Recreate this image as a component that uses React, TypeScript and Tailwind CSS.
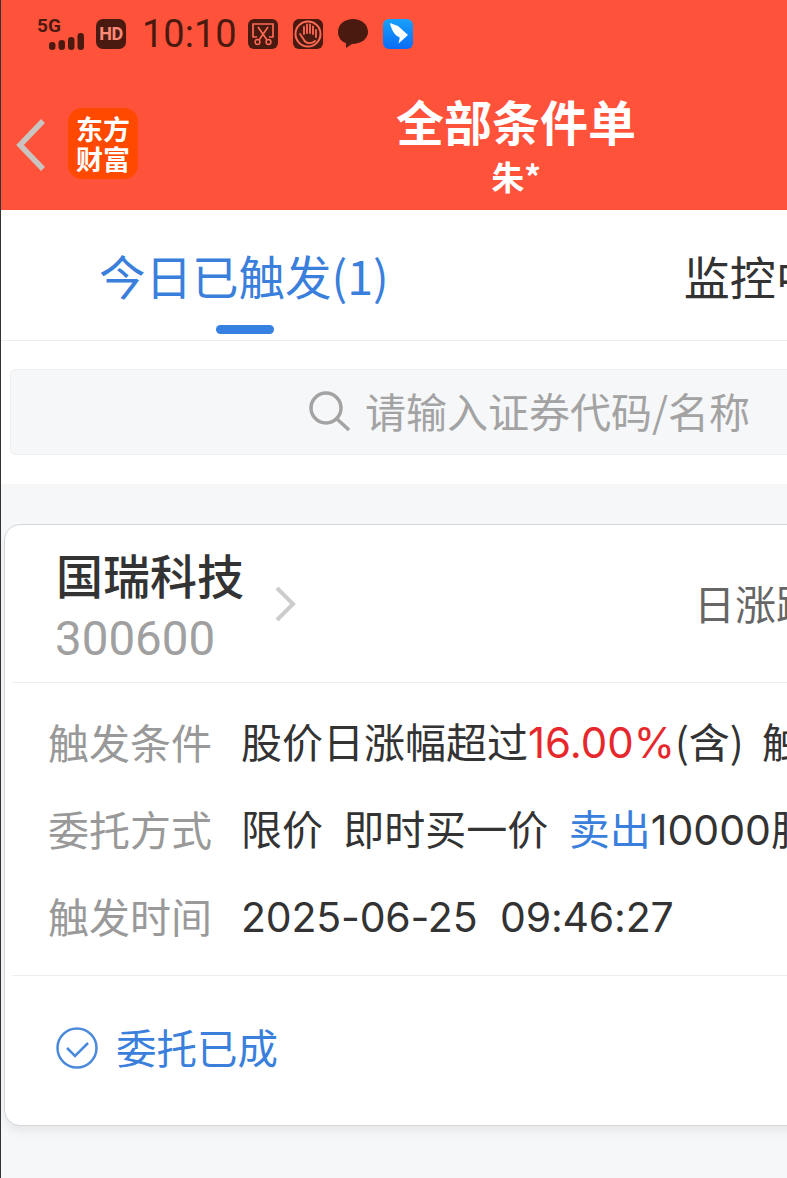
import React from "react";

const cjk = { fontFamily: '"Noto Sans CJK SC", Roboto, sans-serif' };
const num = { fontFamily: "Roboto, sans-serif" };
const inter = { fontFamily: "Inter, sans-serif" };

function Row({ label, children }: { label: string; children: React.ReactNode }) {
  return (
    <div className="flex h-[87px] items-center whitespace-nowrap text-[41px] leading-none">
      <span className="w-[193px] shrink-0 text-[#999999]">{label}</span>
      <span className="whitespace-pre text-[#333333]">{children}</span>
    </div>
  );
}

function StatusIcons() {
  return (
    <div className="flex h-[68px] items-center pl-[36px] text-[#4a1a10]">
      <div className="relative h-[32px] w-[49px]">
        <span className="absolute left-0 top-[-2px] text-[19px] font-bold leading-[20px]" style={num}>5G</span>
        <svg className="absolute left-[12px] top-[15px]" width="36" height="18" viewBox="0 0 36 18" fill="#4a1a10">
          <rect x="0" y="9" width="6.500" height="8" rx="3.200" />
          <rect x="9.500" y="7" width="6.500" height="10" rx="3.200" />
          <rect x="19" y="4" width="6.500" height="13" rx="3.200" />
          <rect x="28.500" y="0" width="6.500" height="17" rx="3.200" />
        </svg>
      </div>
      <div className="ml-[10px] flex h-[30px] w-[30px] items-center justify-center rounded-[7px] bg-[#4a1a10]">
        <span className="text-[18px] font-bold leading-none tracking-[-0.5px] text-[#ff8a78]" style={num}>HD</span>
      </div>
      <span className="ml-[16px] w-[92px] text-[38px] leading-none text-[#4a1a10]" style={num}>10:10</span>
      <svg className="ml-[14px]" width="30" height="30" viewBox="0 0 30 30">
        <rect width="30" height="30" rx="6" fill="#4a1a10" />
        <path d="M9 18H5V5h20v13h-4M10 8l9 13M20 8l-9 13" fill="none" stroke="#ff6a55" strokeWidth="1.700" />
        <circle cx="9.500" cy="23" r="2.400" fill="none" stroke="#ff6a55" strokeWidth="1.500" />
        <circle cx="20.500" cy="23" r="2.400" fill="none" stroke="#ff6a55" strokeWidth="1.500" />
      </svg>
      <svg className="ml-[15px]" width="30" height="30" viewBox="0 0 30 30">
        <rect width="30" height="30" rx="6" fill="#4a1a10" />
        <circle cx="15" cy="15" r="12.500" fill="none" stroke="#ff6a55" strokeWidth="2" />
        <path d="M11 15V8M14 14V5.500M17 14V5.500M20 15V7.500M23 18v-7M7 15l4 6c2 4 8 4 11 1" fill="none" stroke="#ff6a55" strokeWidth="1.800" strokeLinecap="round" />
      </svg>
      <svg className="ml-[15px]" width="30" height="30" viewBox="0 0 30 30">
        <path d="M15 0C7 0 0 5 0 13c0 6 4 10 8 11l0 5 6-4c9 0 16-5 16-12C30 5 23 0 15 0z" fill="#4a1a10" />
      </svg>
      <svg className="ml-[15px]" width="30" height="30" viewBox="0 0 30 30">
        <defs>
          <linearGradient id="wing" x1="0" y1="0" x2="0" y2="1">
            <stop offset="0" stopColor="#18a0fb" />
            <stop offset="1" stopColor="#0a6cf5" />
          </linearGradient>
        </defs>
        <rect width="30" height="30" rx="6" fill="url(#wing)" />
        <path d="M7 4l8 3 10 9-10 9c1-3 2-5 1-7-4-1-8-8-9-14z" fill="#ffffff" />
        <path d="M15 25l1-7" stroke="#1685f5" strokeWidth="1" />
      </svg>
    </div>
  );
}

export default function App() {
  return (
    <div className="h-[1178px] w-[787px] overflow-hidden border-l border-[#333333] bg-[#f6f7f9]" style={cjk}>
      <div className="h-[210px] bg-[#ff523b]">
        <StatusIcons />
        <div className="relative flex h-[142px] items-start">
          <svg className="ml-[14px] mt-[50px] shrink-0" width="32" height="54" viewBox="0 0 32 54">
            <path d="M28 3L5 27l23 24" fill="none" stroke="#c9c4c0" strokeWidth="5.500" />
          </svg>
          <div className="ml-[21px] mt-[40px] flex h-[71px] w-[70px] shrink-0 flex-col items-center justify-center rounded-[14px] bg-[#ff4800] text-[27px] font-bold leading-[30px] text-white">
            <span>东方</span>
            <span>财富</span>
          </div>
          <div className="ml-[258px] flex flex-col items-center whitespace-nowrap text-white">
            <span className="mt-[22px] text-[48px] font-bold leading-[60px]">全部条件单</span>
            <span className="mt-[4px] text-[33px] font-bold leading-[44px]">朱*</span>
          </div>
        </div>
      </div>

      <div className="bg-white">
        <div className="flex h-[131px] border-b border-[#eeeeee] whitespace-nowrap">
          <div className="ml-[98px] flex flex-col items-center">
            <span className="mt-[35px] text-[46.500px] leading-[60px] text-[#3a7fdc]">今日已触发(1)</span>
            <span className="ml-[2px] mt-[20px] h-[9px] w-[58px] rounded-full bg-[#3580e0]" />
          </div>
          <span className="ml-[295px] mt-[35px] text-[46px] leading-[60px] text-[#333333]">监控中(0)</span>
        </div>
        <div className="h-[143px] pt-[28px] pl-[9px]">
          <div className="flex h-[86px] w-[900px] items-center rounded-[6px] border border-[#eeeff1] bg-[#f6f7f9] pl-[297px]">
            <svg width="42" height="42" viewBox="0 0 42 42" className="mt-[-3px] shrink-0">
              <circle cx="18" cy="18" r="15" fill="none" stroke="#a3a3a3" strokeWidth="3.500" />
              <path d="M29 29l12 11" stroke="#a3a3a3" strokeWidth="3.500" />
            </svg>
            <span className="ml-[15px] mt-[-4px] whitespace-nowrap text-[41px] leading-none text-[#a3a3a3]">请输入证券代码/名称</span>
          </div>
        </div>
      </div>

      <div className="ml-[3px] mt-[40px] h-[602px] w-[900px] rounded-[16px] border border-[#d4d6da] bg-white shadow-[0_6px_8px_rgba(0,0,0,0.06)]">
        <div className="mx-[7px] flex h-[158px] items-start border-b border-[#eeeeee] whitespace-nowrap">
          <div className="ml-[44px] flex w-[187px] flex-col">
            <span className="mt-[19px] text-[47px] font-medium leading-[60px] text-[#333333]">国瑞科技</span>
            <span className="ml-[-1px] mt-[9px] text-[47.500px] leading-[52px] text-[#a0a0a0]" style={num}>300600</span>
          </div>
          <svg className="ml-[31px] mt-[60px] shrink-0" width="24" height="38" viewBox="0 0 24 38">
            <path d="M3 3l16 16L3 35" fill="none" stroke="#cccccc" strokeWidth="4" />
          </svg>
          <span className="ml-[396px] mt-[52px] text-[41px] leading-[50px] text-[#666666]">日涨跌幅</span>
        </div>
        <div className="mx-[7px] h-[293px] border-b border-[#eeeeee] pl-[36px] pt-[15px]">
          <Row label="触发条件">
            股价日涨幅超过<span className="text-[42px] text-[#e6282d]" style={inter}>16.00%</span>(含)  触发
          </Row>
          <Row label="委托方式">
            <span className="[word-spacing:1px]">限价  即时买一价  </span><span className="text-[#3a7fdc]">卖出</span><span style={inter}>10000</span>股
          </Row>
          <Row label="触发时间">
            <span style={inter} className="tracking-[-0.2px]">2025-06-25  09:46:27</span>
          </Row>
        </div>
        <div className="flex h-[149px] items-center pl-[51px]">
          <svg width="42" height="42" viewBox="0 0 42 42" className="mt-[-5px] shrink-0">
            <circle cx="21" cy="21" r="19.500" fill="none" stroke="#4a8ada" strokeWidth="2.500" />
            <path d="M11 21l8 8 13-13" fill="none" stroke="#4a8ada" strokeWidth="2.500" />
          </svg>
          <span className="ml-[18px] mt-[-7px] whitespace-nowrap text-[40.500px] leading-none text-[#3a7fdc]">委托已成</span>
        </div>
      </div>
    </div>
  );
}
